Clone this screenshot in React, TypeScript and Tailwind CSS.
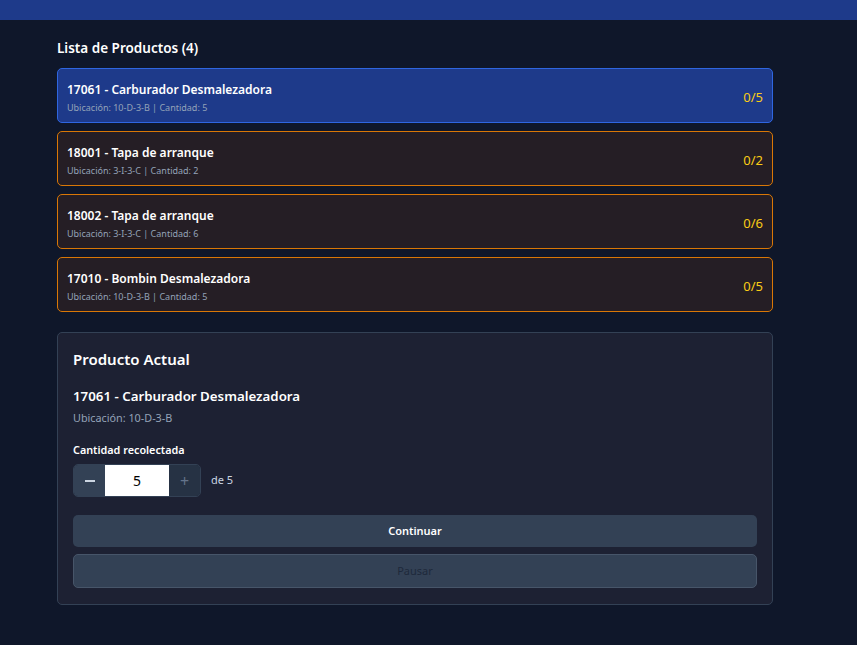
import React from "react";

const PRODUCTS = [
  { code: "17061", name: "Carburador Desmalezadora", loc: "10-D-3-B", qty: 5, active: true },
  { code: "18001", name: "Tapa de arranque", loc: "3-I-3-C", qty: 2, active: false },
  { code: "18002", name: "Tapa de arranque", loc: "3-I-3-C", qty: 6, active: false },
  { code: "17010", name: "Bombin Desmalezadora", loc: "10-D-3-B", qty: 5, active: false },
];

export default function App() {
  return (
    <div
      className="min-h-[645px] bg-[#0f172a] text-white"
      style={{ fontFamily: '"Noto Sans", "Open Sans", sans-serif' }}
    >
      <div className="h-5 bg-[#1e3a8a]" />

      <main className="mx-[57px] w-[716px] pt-[18px]">
        <h2 className="text-[13.5px] font-semibold leading-5">Lista de Productos (4)</h2>

        <div className="mt-[10px] flex flex-col gap-2">
          {PRODUCTS.map((p) => (
            <div
              key={p.code + p.name}
              className={`flex h-[55px] items-center justify-between rounded-[5px] border px-[9px] ${
                p.active ? "border-[#2f66e0] bg-[#1e3a8a]" : "border-[#d97706] bg-[#251e25]"
              }`}
            >
              <div className="flex flex-col pt-[3px]">
                <span className="text-[12px] font-semibold leading-[18px]">
                  {p.code} - {p.name}
                </span>
                <span className="mt-[3px] text-[9px] leading-3 text-[#94a3b8]">
                  Ubicación: {p.loc} | Cantidad: {p.qty}
                </span>
              </div>
              <span className="pt-[4px] text-[13px] text-[#facc15]">0/{p.qty}</span>
            </div>
          ))}
        </div>

        <section className="mt-5 rounded-[5px] border border-[#334155] bg-[#1d2133] px-[15px] pb-4 pt-[14px]">
          <h3 className="text-[15px] font-semibold leading-6">Producto Actual</h3>
          <div className="mt-[15px] text-[13.3px] font-semibold leading-5">17061 - Carburador Desmalezadora</div>
          <div className="mt-[4px] text-[10.8px] leading-4 text-[#94a3b8]">Ubicación: 10-D-3-B</div>

          <div className="mt-[16px] text-[10.8px] font-semibold leading-4">Cantidad recolectada</div>
          <div className="mt-[6px] flex items-center gap-[10px]">
            <div className="flex h-[33px] overflow-hidden rounded-[5px] border border-[#334155]">
              <button className="flex w-[31px] items-center justify-center bg-[#334155] text-[#cbd5e1]">
                <span className="block h-[2px] w-[10px] bg-[#cbd5e1]" />
              </button>
              <input
                readOnly
                value="5"
                className="w-[64px] bg-white text-center text-[14px] text-black outline-none"
              />
              <button className="flex w-[31px] items-center justify-center bg-[#263244] text-[16px] text-[#64748b]">
                +
              </button>
            </div>
            <span className="text-[11px] text-[#cbd5e1]">de 5</span>
          </div>

          <button className="mt-[18px] flex h-[32px] w-full items-center justify-center rounded-[5px] bg-[#334155] text-[11px] font-semibold text-white">
            Continuar
          </button>
          <button className="mt-[7px] flex h-[34px] w-full items-center justify-center rounded-[5px] border border-[#475569] bg-[#334155] text-[11px] text-[#1e293b]">
            Pausar
          </button>
        </section>
      </main>
    </div>
  );
}
